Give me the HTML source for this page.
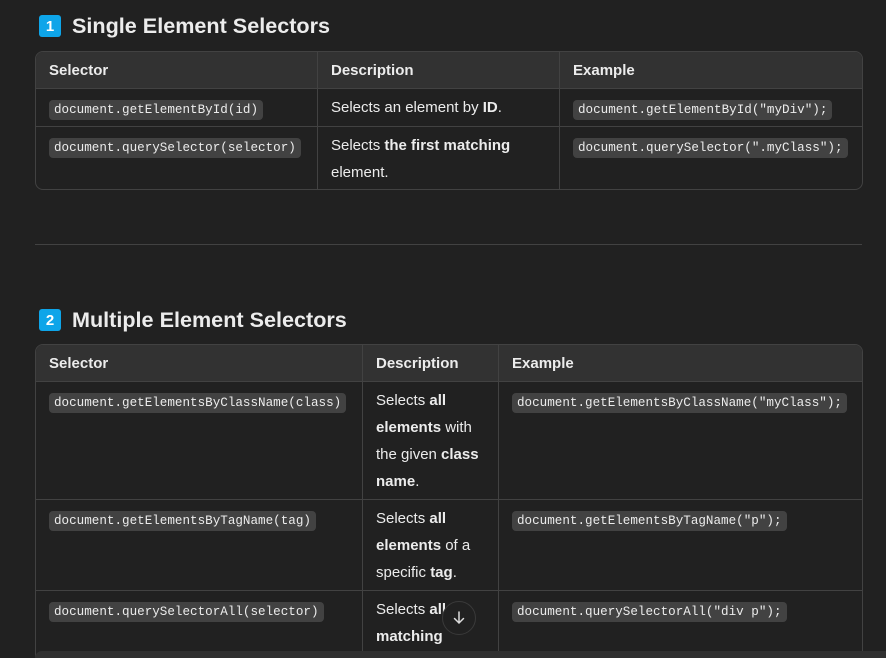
<!DOCTYPE html>
<html style="width:886px;height:658px;overflow:hidden"><head><style>
body{margin:0;width:886px;height:658px;background:#212121;overflow:hidden;font-family:"Liberation Sans",sans-serif;color:#ececec;position:relative}
.h{position:absolute;left:39px;font-size:21.6px;font-weight:bold;display:flex;align-items:center}
.b{width:22px;height:22px;background:#0ea5e9;border-radius:3px;color:#fff;font-size:15px;display:flex;align-items:center;justify-content:center;margin-right:11px}
table{position:absolute;left:35px;width:828px;table-layout:fixed;border-collapse:separate;border-spacing:0;border:1px solid #424242;border-radius:8px;overflow:hidden;font-size:15px}
th{background:#323232;text-align:left;font-weight:bold;height:36px;padding:0 13px;border-bottom:1px solid #424242}
td{vertical-align:top;padding:0 13px;line-height:27px;border-bottom:1px solid #424242;white-space:nowrap}
th+th,td+td{border-left:1px solid #424242}
tr:last-child td{border-bottom:none}
code{font-family:"Liberation Mono",monospace;font-size:12.6px;background:#424242;border-radius:4px;padding:3px 5px}
.c{padding-top:6px}
</style></head><body>
<div class="h" style="top:13px"><span class="b">1</span>Single Element Selectors</div>
<table style="top:51px">
<colgroup><col style="width:281px"><col style="width:242px"><col></colgroup>
<tr><th>Selector</th><th>Description</th><th>Example</th></tr>
<tr style="height:38px"><td class="c"><code>document.getElementById(id)</code></td><td style="padding-top:5px">Selects an element by <b>ID</b>.</td><td class="c"><code>document.getElementById("myDiv");</code></td></tr>
<tr style="height:62px"><td class="c"><code>document.querySelector(selector)</code></td><td style="padding-top:5px">Selects <b>the first matching</b><br>element.</td><td class="c"><code>document.querySelector(".myClass");</code></td></tr>
</table>
<div style="position:absolute;left:35px;top:244px;width:827px;height:1px;background:#424242"></div>
<div class="h" style="top:307px"><span class="b">2</span>Multiple Element Selectors</div>
<table style="top:344px">
<colgroup><col style="width:326px"><col style="width:136px"><col></colgroup>
<tr><th>Selector</th><th>Description</th><th>Example</th></tr>
<tr style="height:118px"><td class="c"><code>document.getElementsByClassName(class)</code></td><td style="padding-top:5px">Selects <b>all</b><br><b>elements</b> with<br>the given <b>class</b><br><b>name</b>.</td><td class="c"><code>document.getElementsByClassName("myClass");</code></td></tr>
<tr style="height:91px"><td class="c"><code>document.getElementsByTagName(tag)</code></td><td style="padding-top:5px">Selects <b>all</b><br><b>elements</b> of a<br>specific <b>tag</b>.</td><td class="c"><code>document.getElementsByTagName("p");</code></td></tr>
<tr style="height:80px"><td class="c"><code>document.querySelectorAll(selector)</code></td><td style="padding-top:5px">Selects <b>all</b><br><b>matching</b><br>elements.</td><td class="c"><code>document.querySelectorAll("div p");</code></td></tr>
</table>
<div style="position:absolute;left:442px;top:601px;width:32px;height:32px;border-radius:50%;border:1px solid #3a3a3a;background:#212121;display:flex;align-items:center;justify-content:center">
<svg width="16" height="16" viewBox="0 0 16 16" fill="none" stroke="#ddd" stroke-width="1.5" stroke-linecap="round"><path d="M8 2v11M3.5 8.5L8 13l4.5-4.5"/></svg></div>
<div style="position:absolute;left:35px;top:651px;width:851px;height:7px;background:#303030;border-radius:14px 0 0 0"></div>
</body></html>
